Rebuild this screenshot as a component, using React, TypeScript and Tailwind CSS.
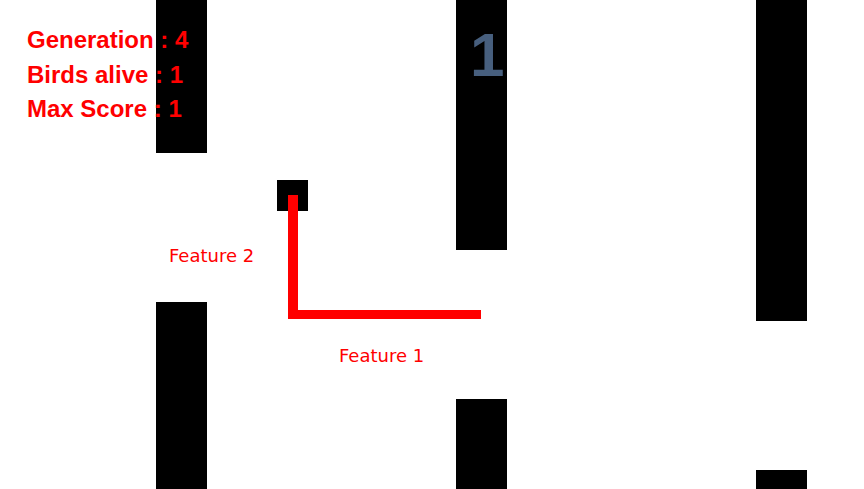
import React from "react";

type Pipe = {
  x: number;
  topH: number; // bottom edge of the top pipe
  botY: number; // top edge of the bottom pipe
};

const pipes: Pipe[] = [
  { x: 156, topH: 153, botY: 302 },
  { x: 456, topH: 250, botY: 399 },
  { x: 756, topH: 321, botY: 470 },
];

const App: React.FC = () => {
  return (
    <div className="relative w-[864px] h-[489px] overflow-hidden bg-white">
      {/* pipes (game objects on the canvas) */}
      {pipes.map((p) => (
        <React.Fragment key={p.x}>
          <div
            className="absolute top-0 w-[51px] bg-black"
            style={{ left: p.x, height: p.topH }}
          />
          <div
            className="absolute bottom-0 w-[51px] bg-black"
            style={{ left: p.x, top: p.botY }}
          />
        </React.Fragment>
      ))}

      {/* score */}
      <div className="absolute left-[470px] top-[24px] text-[62px] leading-none font-bold text-[#475f7e] font-['Liberation_Sans',Arial,sans-serif]">
        1
      </div>

      {/* bird */}
      <div className="absolute left-[277px] top-[180px] w-[31px] h-[31px] bg-black" />

      {/* feature lines */}
      <div className="absolute left-[288px] top-[195px] w-[10px] h-[124px] bg-[#ff0000]" />
      <div className="absolute left-[288px] top-[310px] w-[193px] h-[9px] bg-[#ff0000]" />

      <div className="absolute left-[169px] top-[247px] text-[18px] leading-none text-[#ff0000] font-['DejaVu_Sans',sans-serif]">
        Feature 2
      </div>
      <div className="absolute left-[339px] top-[347px] text-[18px] leading-none text-[#ff0000] font-['DejaVu_Sans',sans-serif]">
        Feature 1
      </div>

      {/* hud, sits over the pipes */}
      <div className="relative pl-[27px] pt-[23px] flex flex-col text-[24px] leading-[34.5px] font-bold text-[#ff0000] font-['Liberation_Sans',Arial,sans-serif]">
        <span>Generation : 4</span>
        <span>Birds alive : 1</span>
        <span>Max Score : 1</span>
      </div>
    </div>
  );
};

export default App;
